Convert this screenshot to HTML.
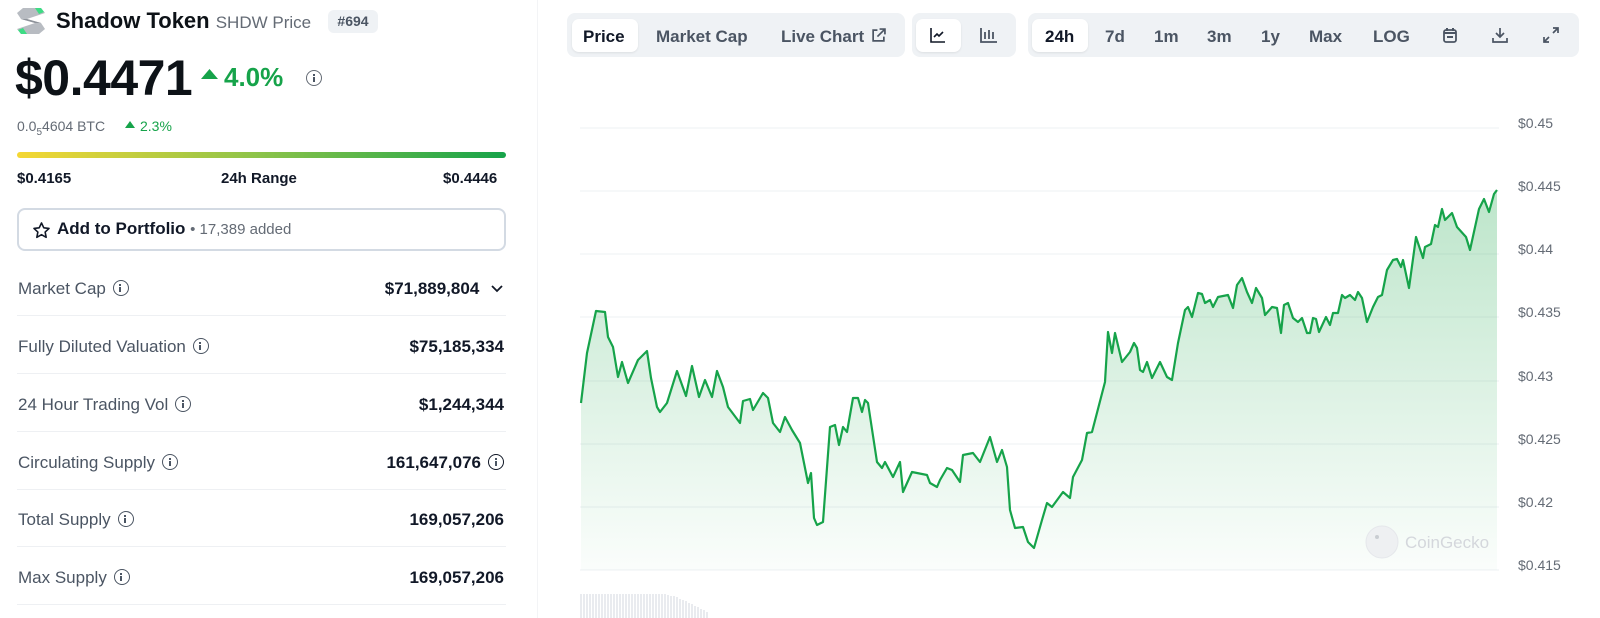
<!DOCTYPE html>
<html><head><meta charset="utf-8"><style>
*{margin:0;padding:0;box-sizing:border-box}
body{width:1600px;height:618px;background:#fff;font-family:"Liberation Sans",sans-serif;position:relative;overflow:hidden;color:#0d1217}
.a{position:absolute;white-space:nowrap}
.row{position:absolute;left:17px;width:489px;height:58px;border-bottom:1px solid #eef0f3}
.row .l{position:absolute;left:1px;top:21px;font-size:17px;color:#4b5563}
.row .v{position:absolute;right:2px;top:21px;font-size:17px;font-weight:bold;color:#111827}
.i{display:inline-block;width:16px;height:16px;border:1.5px solid #4b5563;border-radius:50%;vertical-align:-2px;margin-left:7px;position:relative}
.i:after{content:"";position:absolute;left:5.5px;top:5.5px;width:2px;height:5px;background:#4b5563}
.i:before{content:"";position:absolute;left:5.5px;top:2.5px;width:2px;height:2px;background:#4b5563}
.grp{position:absolute;background:#eff2f5;border-radius:8px;top:13px;height:44px}
.pill{position:absolute;background:#fff;border-radius:7px;top:6px;height:33px;box-shadow:0 1px 2px rgba(0,0,0,.08)}
.t{position:absolute;top:13px;font-size:17px;font-weight:bold;color:#4b5563;white-space:nowrap}
.ax{position:absolute;left:1518px;font-size:14px;color:#646b75}
</style></head><body>
<svg class="a" style="left:15px;top:5px" width="32" height="32" viewBox="0 0 32 32">
<path d="M8 3 L26 3 L30 8 L12 14 L26 18 L30 24 L24 29 L6 29 L2 24 L20 18 L6 14 L2 8 Z" fill="#b8bcc2"/>
<path d="M12 14 L26 18 L20 18 L6 14Z" fill="#8e939a"/>
<path d="M20 3 L26 3 L29 7 L24 9Z" fill="#3ddc84"/>
<path d="M3 25 L8 23 L12 29 L6 29Z" fill="#3ddc84"/>
</svg>
<div class="a" style="left:56px;top:8px;font-size:22px;font-weight:bold;color:#0d1217">Shadow Token <span style="font-size:17px;font-weight:normal;color:#646b75">SHDW Price</span></div>
<div class="a" style="left:328px;top:10px;width:50px;height:23px;background:#eff2f5;border-radius:6px;font-size:14px;font-weight:bold;color:#4b5563;text-align:center;line-height:23px">#694</div>
<div class="a" style="left:15px;top:49px;font-size:50px;font-weight:bold;color:#0d1217;letter-spacing:-0.5px">$0.4471</div>
<svg class="a" style="left:201px;top:69px" width="17" height="10"><path d="M8.5 0 L17 10 L0 10Z" fill="#16a34a"/></svg>
<div class="a" style="left:224px;top:62px;font-size:26px;font-weight:bold;color:#16a34a">4.0%</div>
<span class="i a" style="left:299px;top:70px;border-color:#646b75"></span>
<div class="a" style="left:17px;top:118px;font-size:14px;color:#646b75">0.0<sub style="font-size:10px">5</sub>4604 BTC</div>
<svg class="a" style="left:125px;top:121px" width="10" height="7"><path d="M5 0 L10 7 L0 7Z" fill="#16a34a"/></svg>
<div class="a" style="left:140px;top:118px;font-size:14px;color:#16a34a">2.3%</div>
<div class="a" style="left:17px;top:152px;width:489px;height:6px;border-radius:3px;background:linear-gradient(90deg,#f5d733,#8bc34a 50%,#16a34a)"></div>
<div class="a" style="left:17px;top:170px;font-size:15px;font-weight:bold;color:#111827">$0.4165</div>
<div class="a" style="left:221px;top:170px;font-size:15px;font-weight:bold;color:#111827">24h Range</div>
<div class="a" style="left:443px;top:170px;font-size:15px;font-weight:bold;color:#111827">$0.4446</div>
<div class="a" style="left:17px;top:208px;width:489px;height:43px;border:2px solid #d3dae3;border-radius:8px"></div>
<svg class="a" style="left:32px;top:221px" width="19" height="19" viewBox="0 0 24 24"><path d="M12 2.5l2.9 6.1 6.6.8-4.9 4.6 1.3 6.6L12 17.3l-5.9 3.3 1.3-6.6-4.9-4.6 6.6-.8z" fill="none" stroke="#111827" stroke-width="2" stroke-linejoin="round"/></svg>
<div class="a" style="left:57px;top:219px;font-size:17px;font-weight:bold;color:#111827">Add to Portfolio <span style="font-size:15px;font-weight:normal;color:#646b75">• 17,389 added</span></div>
<div class="row" style="top:258px"><div class="l">Market Cap<span class="i"></span></div><div class="v">$71,889,804 <svg width="14" height="10" style="margin-left:6px"><path d="M2 2 L7 7 L12 2" fill="none" stroke="#111827" stroke-width="1.8"/></svg></div></div>
<div class="row" style="top:316px"><div class="l">Fully Diluted Valuation<span class="i"></span></div><div class="v">$75,185,334</div></div>
<div class="row" style="top:374px"><div class="l">24 Hour Trading Vol<span class="i"></span></div><div class="v">$1,244,344</div></div>
<div class="row" style="top:432px"><div class="l">Circulating Supply<span class="i"></span></div><div class="v">161,647,076<span class="i" style="border-color:#111827"></span></div></div>
<div class="row" style="top:489px"><div class="l">Total Supply<span class="i"></span></div><div class="v">169,057,206</div></div>
<div class="row" style="top:547px"><div class="l">Max Supply<span class="i"></span></div><div class="v">169,057,206</div></div>
<div class="a" style="left:537px;top:0;width:1px;height:618px;background:#f3f4f6"></div>

<div class="grp" style="left:567px;width:338px"><div class="pill" style="left:5px;width:66px"></div>
<div class="t" style="left:16px;top:14px;color:#111827">Price</div><div class="t" style="left:89px;top:14px">Market Cap</div><div class="t" style="left:214px;top:14px">Live Chart</div>
<svg class="a" style="left:304px;top:15px" width="15" height="15" viewBox="0 0 14 14"><path d="M6 2H2v10h10V8M8 1h5v5M13 1L6 8" fill="none" stroke="#4b5563" stroke-width="1.6"/></svg></div>
<div class="grp" style="left:912px;width:104px"><div class="pill" style="left:4px;width:45px"></div>
<svg class="a" style="left:18px;top:14px" width="16" height="16" viewBox="0 0 16 16"><path d="M1 1v14h14M4 10l3-3 2 2 4-4" fill="none" stroke="#111827" stroke-width="1.6"/></svg>
<svg class="a" style="left:68px;top:14px" width="18" height="16" viewBox="0 0 18 16"><path d="M1 1v14h16M5 5v7M9 3v9M13 5v7" fill="none" stroke="#4b5563" stroke-width="1.8"/></svg></div>
<div class="grp" style="left:1028px;width:551px"><div class="pill" style="left:4px;width:56px"></div>
<div class="t" style="left:17px;top:14px;color:#111827">24h</div><div class="t" style="left:77px;top:14px">7d</div><div class="t" style="left:126px;top:14px">1m</div><div class="t" style="left:179px;top:14px">3m</div><div class="t" style="left:233px;top:14px">1y</div><div class="t" style="left:281px;top:14px">Max</div><div class="t" style="left:345px;top:14px">LOG</div>
<svg class="a" style="left:414px;top:14px" width="16" height="17" viewBox="0 0 16 17"><rect x="2" y="3" width="12" height="12" rx="2" fill="none" stroke="#4b5563" stroke-width="1.8"/><path d="M2 6h12" stroke="#4b5563" stroke-width="2"/><path d="M5 1v3M11 1v3M5 10h6" stroke="#4b5563" stroke-width="2"/></svg>
<svg class="a" style="left:463px;top:13px" width="18" height="18" viewBox="0 0 18 18"><path d="M9 2v9M5 7l4 4 4-4M2 12v4h14v-4" fill="none" stroke="#4b5563" stroke-width="1.7"/></svg>
<svg class="a" style="left:514px;top:13px" width="18" height="18" viewBox="0 0 18 18"><path d="M11 2h5v5M16 2l-5 5M7 16H2v-5M2 16l5-5" fill="none" stroke="#4b5563" stroke-width="1.7"/></svg></div>

<svg class="a" style="left:0;top:0" width="1600" height="618" viewBox="0 0 1600 618">
<defs><linearGradient id="g" gradientUnits="userSpaceOnUse" x1="0" y1="190" x2="0" y2="570"><stop offset="0" stop-color="#22a94f" stop-opacity="0.30"/><stop offset="1" stop-color="#22a94f" stop-opacity="0.02"/></linearGradient></defs>
<g stroke="#eef0f3" stroke-width="1">
<path d="M580 128H1499M580 191H1499M580 254H1499M580 317H1499M580 381H1499M580 444H1499M580 507H1499M580 570H1499"/></g>
<g stroke="#e9ebef" stroke-width="2">
<path d="M581 594V618M584 594V618M587 594V618M590 594V618M593 594V618M596 594V618M599 594V618M602 594V618M605 594V618M608 594V618M611 594V618M614 594V618M617 594V618M620 594V618M623 594V618M626 594V618M629 594V618M632 594V618M635 594V618M638 594V618M641 594V618M644 594V618M647 594V618M650 594V618M653 594V618M656 594V618M659 594V618M662 594V618M665 594V618M668 595V618M671 596V618M674 596V618M677 597V618M680 599V618M683 600V618M686 601V618M689 603V618M692 604V618M695 606V618M698 607V618M701 609V618M704 610V618M707 612V618"/></g>
<path d="M581,403 587,353 596,311 605,312 608,337 613,347 618,377 622,362 628,383 638,360 647,351 651,378 657,407 660,412 667,403 677,371 686,396 692,366 699,397 705,380 712,397 717,371 723,387 728,407 740,423 743,401 750,399 753,410 763,393 768,398 773,423 780,432 785,417 792,430 800,443 808,483 811,473 814,518 817,525 823,522 830,427 835,425 839,445 843,427 847,432 853,398 858,398 862,412 865,400 868,403 877,462 882,468 885,462 893,477 900,462 903,492 912,472 927,475 930,483 937,487 940,480 947,468 952,470 960,482 963,455 973,453 980,462 990,437 997,462 1002,450 1007,467 1010,510 1015,528 1023,527 1028,542 1034,548 1042,520 1047,503 1052,507 1063,492 1070,498 1073,477 1082,460 1087,433 1092,432 1105,382 1108,332 1112,353 1115,333 1122,362 1130,352 1134,343 1137,348 1140,370 1143,372 1147,362 1152,378 1160,362 1167,377 1172,380 1178,343 1185,310 1188,307 1192,317 1198,293 1202,294 1205,303 1210,300 1213,307 1218,297 1228,295 1233,308 1237,285 1242,278 1247,292 1252,303 1256,288 1262,298 1265,315 1272,307 1277,308 1281,333 1284,305 1288,303 1293,318 1298,322 1302,318 1307,333 1310,333 1313,318 1316,319 1319,332 1326,317 1330,325 1333,313 1338,313 1342,295 1345,298 1350,295 1355,300 1358,292 1362,298 1367,322 1373,307 1378,297 1382,295 1387,270 1393,260 1397,259 1401,267 1403,260 1409,288 1416,237 1423,258 1425,247 1431,244 1435,225 1438,227 1442,209 1445,220 1452,213 1457,227 1466,237 1470,250 1479,209 1484,199 1489,212 1494,194 1497,190 1497,570 581,570Z" fill="url(#g)"/>
<path d="M581,403 587,353 596,311 605,312 608,337 613,347 618,377 622,362 628,383 638,360 647,351 651,378 657,407 660,412 667,403 677,371 686,396 692,366 699,397 705,380 712,397 717,371 723,387 728,407 740,423 743,401 750,399 753,410 763,393 768,398 773,423 780,432 785,417 792,430 800,443 808,483 811,473 814,518 817,525 823,522 830,427 835,425 839,445 843,427 847,432 853,398 858,398 862,412 865,400 868,403 877,462 882,468 885,462 893,477 900,462 903,492 912,472 927,475 930,483 937,487 940,480 947,468 952,470 960,482 963,455 973,453 980,462 990,437 997,462 1002,450 1007,467 1010,510 1015,528 1023,527 1028,542 1034,548 1042,520 1047,503 1052,507 1063,492 1070,498 1073,477 1082,460 1087,433 1092,432 1105,382 1108,332 1112,353 1115,333 1122,362 1130,352 1134,343 1137,348 1140,370 1143,372 1147,362 1152,378 1160,362 1167,377 1172,380 1178,343 1185,310 1188,307 1192,317 1198,293 1202,294 1205,303 1210,300 1213,307 1218,297 1228,295 1233,308 1237,285 1242,278 1247,292 1252,303 1256,288 1262,298 1265,315 1272,307 1277,308 1281,333 1284,305 1288,303 1293,318 1298,322 1302,318 1307,333 1310,333 1313,318 1316,319 1319,332 1326,317 1330,325 1333,313 1338,313 1342,295 1345,298 1350,295 1355,300 1358,292 1362,298 1367,322 1373,307 1378,297 1382,295 1387,270 1393,260 1397,259 1401,267 1403,260 1409,288 1416,237 1423,258 1425,247 1431,244 1435,225 1438,227 1442,209 1445,220 1452,213 1457,227 1466,237 1470,250 1479,209 1484,199 1489,212 1494,194 1497,190" fill="none" stroke="#16a34a" stroke-width="2.2" stroke-linejoin="round"/>
<circle cx="1382" cy="542" r="16" fill="#eef0f2" stroke="#e5e7eb"/>
<circle cx="1377" cy="537" r="2" fill="#c9cdd2"/>
<text x="1405" y="548" font-family="Liberation Sans" font-size="17" fill="#d4d7dc">CoinGecko</text>
</svg>
<div class="ax" style="top:115px">$0.45</div>
<div class="ax" style="top:178px">$0.445</div>
<div class="ax" style="top:241px">$0.44</div>
<div class="ax" style="top:304px">$0.435</div>
<div class="ax" style="top:368px">$0.43</div>
<div class="ax" style="top:431px">$0.425</div>
<div class="ax" style="top:494px">$0.42</div>
<div class="ax" style="top:557px">$0.415</div>
</body></html>
